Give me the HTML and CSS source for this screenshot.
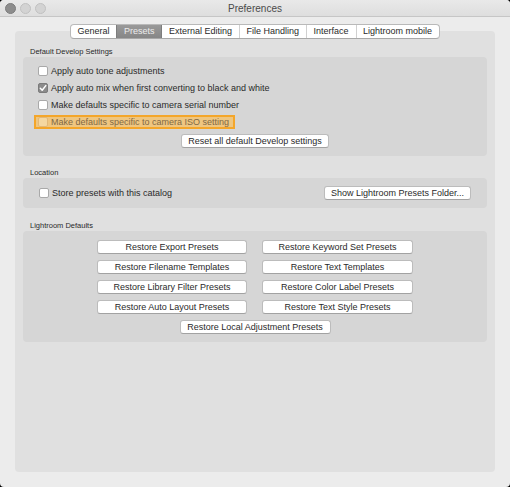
FILE: index.html
```html
<!DOCTYPE html>
<html>
<head>
<meta charset="utf-8">
<link rel="stylesheet" href="styles.css">
</head>
<body>
<div class="window">
  <div class="titlebar">
    <div class="lights"><span class="light close"></span><span class="light"></span><span class="light"></span></div>
    <div class="title">Preferences</div>
    <div></div>
  </div>
  <div class="content">
    <div class="tabs">
      <span class="tab">General</span>
      <span class="tab active">Presets</span>
      <span class="tab">External Editing</span>
      <span class="tab">File Handling</span>
      <span class="tab">Interface</span>
      <span class="tab">Lightroom mobile</span>
    </div>
    <div class="panel">
      <div class="group-label">Default Develop Settings</div>
      <div class="group develop">
        <div class="row"><span class="check"><span class="box"></span>Apply auto tone adjustments</span></div>
        <div class="row"><span class="check"><span class="box checked"><svg viewBox="0 0 10 10" width="10" height="10"><path d="M2.3 5.2 L4.2 7.2 L7.8 2.6" fill="none" stroke="#fff" stroke-width="1.5" stroke-linecap="round" stroke-linejoin="round"/></svg></span>Apply auto mix when first converting to black and white</span></div>
        <div class="row"><span class="check"><span class="box"></span>Make defaults specific to camera serial number</span></div>
        <div class="row"><span class="check hl"><span class="box"></span>Make defaults specific to camera ISO setting</span></div>
        <div class="center"><button class="btn">Reset all default Develop settings</button></div>
      </div>
      <div class="group-label label-location">Location</div>
      <div class="group location">
        <span class="check"><span class="box"></span>Store presets with this catalog</span>
        <button class="btn">Show Lightroom Presets Folder...</button>
      </div>
      <div class="group-label label-defaults">Lightroom Defaults</div>
      <div class="group defaults">
        <button class="btn">Restore Export Presets</button>
        <button class="btn">Restore Keyword Set Presets</button>
        <button class="btn">Restore Filename Templates</button>
        <button class="btn">Restore Text Templates</button>
        <button class="btn">Restore Library Filter Presets</button>
        <button class="btn">Restore Color Label Presets</button>
        <button class="btn">Restore Auto Layout Presets</button>
        <button class="btn">Restore Text Style Presets</button>
        <button class="btn wide">Restore Local Adjustment Presets</button>
      </div>
    </div>
  </div>
</div>
</body>
</html>
```
FILE: styles.css
```css
html, body {
  margin: 0;
  padding: 0;
  background: #000;
}
body {
  font-family: "Liberation Sans", Arial, Helvetica, sans-serif;
  color: #2a2a2a;
}
.window {
  width: 510px;
  height: 487px;
  background: #ececec;
  border-radius: 4px;
  display: flex;
  flex-direction: column;
  overflow: hidden;
}
.titlebar {
  height: 16px;
  background: linear-gradient(#e9e9e9, #dedede);
  border-bottom: 1px solid #c6c6c6;
  display: grid;
  grid-template-columns: 1fr auto 1fr;
  align-items: center;
}
.lights {
  display: flex;
  gap: 4px;
  padding-left: 5px;
}
.light {
  width: 9px;
  height: 9px;
  border-radius: 50%;
  background: #d3d3d3;
  border: 1px solid #c0c0c0;
}
.light.close {
  background: #8d8d8d;
  border-color: #7c7c7c;
}
.title {
  font-size: 10px;
  color: #4a4a4a;
}
.content {
  flex: 1;
  display: flex;
  flex-direction: column;
  padding: 7px 15px 15px;
}
.tabs {
  position: relative;
  z-index: 1;
  align-self: center;
  display: flex;
  height: 15px;
  background: #fff;
  border: 1px solid #b9b9b9;
  border-bottom-color: #a8a8a8;
  border-radius: 4px;
  box-sizing: border-box;
  overflow: hidden;
}
.tab {
  font-size: 9px;
  line-height: 13px;
  padding: 0 7px 0 6.5px;
  border-left: 1px solid #d0d0d0;
  color: #2a2a2a;
  white-space: nowrap;
}
.tab:first-child {
  border-left: none;
}
.tab.active {
  background: linear-gradient(#9a9a9a, #868686);
  color: #ececec;
  border-left-color: #7d7d7d;
}
.tab.active + .tab {
  border-left-color: #7d7d7d;
}
.panel {
  flex: 1;
  margin-top: -8px;
  background: #e0e0e0;
  border-radius: 4px;
  padding: 16px 8px 0;
}
.group-label {
  font-size: 7.5px;
  line-height: 10px;
  height: 10px;
  padding-left: 7px;
  color: #2a2a2a;
  white-space: nowrap;
}
.group {
  background: #d6d6d6;
  border-radius: 4px;
  box-sizing: border-box;
}
.label-location {
  margin-top: 12px;
}
.label-defaults {
  margin-top: 13px;
}
.develop {
  padding: 5px 0 8px 15px;
}
.row {
  height: 17px;
  display: flex;
  align-items: center;
}
.check {
  display: flex;
  align-items: center;
  font-size: 9px;
  color: #2a2a2a;
  white-space: nowrap;
}
.box {
  width: 10px;
  height: 10px;
  box-sizing: border-box;
  background: #fff;
  border: 1px solid #a9a9a9;
  border-radius: 2px;
  margin-right: 3px;
  display: flex;
}
.box.checked {
  background: #8b8b8b;
  border-color: #7b7b7b;
}
.box svg {
  margin: -1px;
}
.check.hl {
  height: 14px;
  box-sizing: border-box;
  margin-left: -4px;
  padding: 0 4px 0 2px;
  background: #efc680;
  border: 2px solid #f4a62a;
  color: #806845;
}
.check.hl .box {
  background: #f5d7a0;
  border-color: #e2b878;
}
.center {
  display: flex;
  justify-content: center;
  margin-top: 4px;
  margin-left: -15px;
}
.btn {
  font-family: "Liberation Sans", Arial, Helvetica, sans-serif;
  font-size: 9px;
  line-height: 12px;
  height: 14px;
  padding: 0;
  margin: 0;
  background: #fff;
  color: #2a2a2a;
  border: 1px solid #bcbcbc;
  border-bottom-color: #a2a2a2;
  border-radius: 3px;
  box-sizing: border-box;
  white-space: nowrap;
  text-align: center;
}
.location {
  height: 30px;
  display: flex;
  align-items: center;
  justify-content: space-between;
  padding: 0 16px;
}
.location .btn {
  width: 147px;
}
.develop .btn {
  width: 148px;
}
.defaults {
  padding: 9px 0 8px;
  display: grid;
  grid-template-columns: 150px 151px;
  justify-content: center;
  column-gap: 15px;
  row-gap: 6px;
}
.defaults .btn {
  width: 100%;
}
.defaults .btn.wide {
  grid-column: 1 / span 2;
  justify-self: center;
  width: 151px;
}
```
